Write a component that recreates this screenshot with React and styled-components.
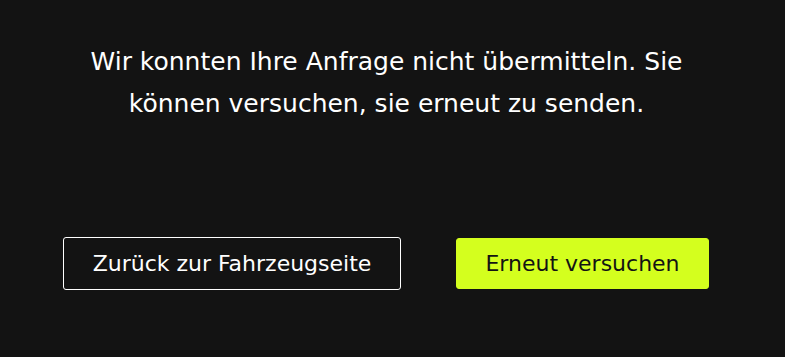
import styled, { createGlobalStyle } from "styled-components";

const GlobalStyle = createGlobalStyle`
  html, body {
    margin: 0;
    padding: 0;
    background: #131313;
  }
  body {
    font-family: "DejaVu Sans", "Open Sans", sans-serif;
    color: #ffffff;
  }
`;

const Page = styled.div`
  width: 785px;
  height: 357px;
  display: flex;
  flex-direction: column;
  align-items: center;
  box-sizing: border-box;
  padding-top: 41px;
`;

const Message = styled.p`
  margin: 0 0 0 -12px;
  width: 640px;
  font-size: 25px;
  line-height: 42px;
  text-align: center;
  font-weight: 400;
`;

const Actions = styled.div`
  display: flex;
  align-items: center;
  gap: 55px;
  margin-top: 112px;
  margin-left: -13px;
`;

const Button = styled.button`
  box-sizing: border-box;
  display: flex;
  align-items: center;
  justify-content: center;
  font-family: inherit;
  font-size: 22px;
  border-radius: 3px;
  cursor: pointer;
  padding: 0;
  width: ${(p) => p.width}px;
  height: ${(p) => p.height}px;
  border: 1px solid ${(p) => (p.primary ? "#d4ff1e" : "#ffffff")};
  background: ${(p) => (p.primary ? "#d4ff1e" : "transparent")};
  color: ${(p) => (p.primary ? "#131313" : "#ffffff")};
  font-weight: 400;
`;

export default function App() {
  return (
    <>
      <GlobalStyle />
      <Page>
        <Message>
          Wir konnten Ihre Anfrage nicht übermitteln. Sie können versuchen, sie
          erneut zu senden.
        </Message>
        <Actions>
          <Button width={338} height={53}>
            Zurück zur Fahrzeugseite
          </Button>
          <Button primary width={253} height={51}>
            Erneut versuchen
          </Button>
        </Actions>
      </Page>
    </>
  );
}
